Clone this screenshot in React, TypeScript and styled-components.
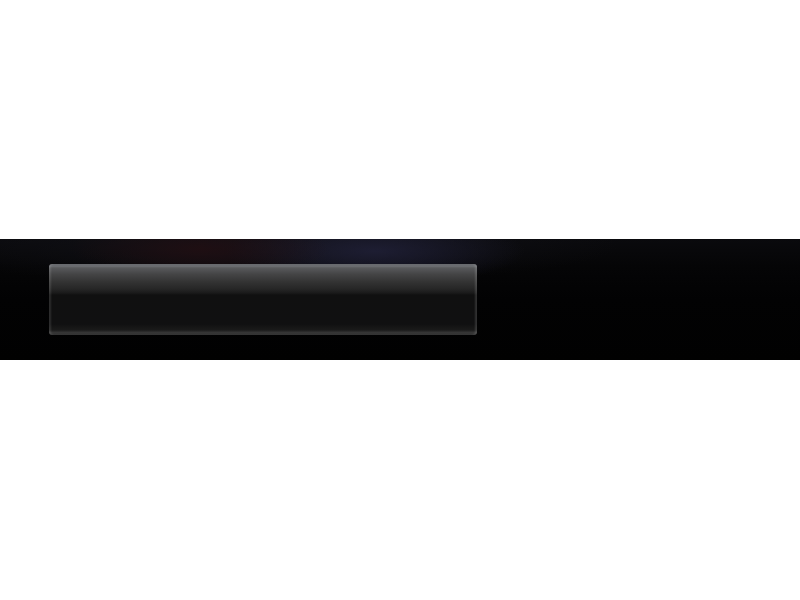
import styled, { createGlobalStyle } from "styled-components";

const GlobalStyle = createGlobalStyle`
  html, body {
    margin: 0;
    padding: 0;
    background: #ffffff;
    font-family: "Liberation Sans", Arial, sans-serif;
  }
`;

const Page = styled.div`
  width: 800px;
  height: 600px;
  padding-top: 239px;
  box-sizing: border-box;
  background: #ffffff;
`;

const Band = styled.section`
  height: 121px;
  box-sizing: border-box;
  padding: 25px 0 0 49px;
  background-color: #020203;
  background-image:
    radial-gradient(ellipse 130px 30px at 200px 10px, rgba(34, 14, 18, 0.8), transparent 100%),
    radial-gradient(ellipse 150px 34px at 375px 12px, rgba(32, 32, 56, 0.85), transparent 100%),
    radial-gradient(ellipse 360px 40px at 260px 6px, rgba(18, 18, 24, 0.9), transparent 100%),
    linear-gradient(to bottom, #0a0a0d 0px, #050506 28px, #020203 60px, #010101 100%);
`;

const Bar = styled.div`
  width: 428px;
  height: 71px;
  border-radius: 3px;
  background: linear-gradient(
    to bottom,
    #5a5c60 0px,
    #6e7074 2px,
    #58595b 4px,
    #454546 10px,
    #333333 18px,
    #262626 25px,
    #1a1a1a 29px,
    #101010 31px,
    #101011 60px,
    #1a1a1a 66px,
    #3a3a3a 69px,
    #202020 71px
  );
  box-shadow:
    inset 2px 0 2px rgba(255, 255, 255, 0.12),
    inset -2px 0 2px rgba(255, 255, 255, 0.14);
`;

export default function App() {
  return (
    <>
      <GlobalStyle />
      <Page>
        <Band>
          <Bar />
        </Band>
      </Page>
    </>
  );
}
